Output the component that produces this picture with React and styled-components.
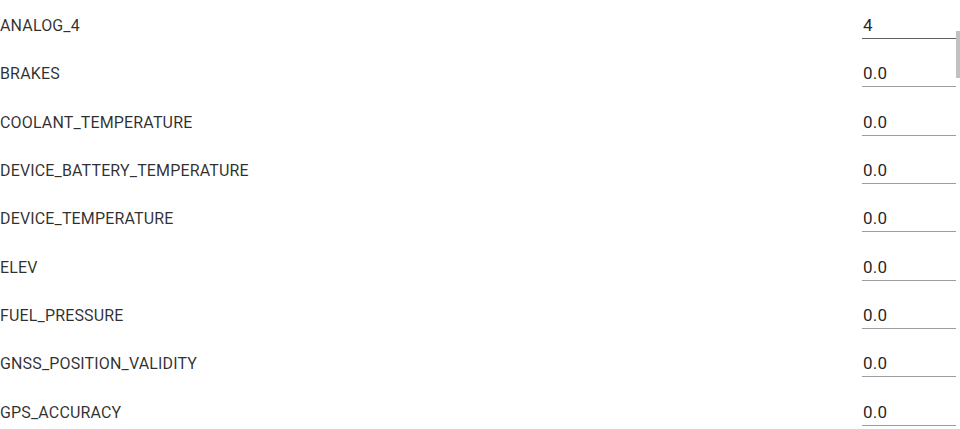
import React from "react";
import styled, { createGlobalStyle } from "styled-components";

const rows = [
  { name: "ANALOG_4", value: "4", active: true },
  { name: "BRAKES", value: "0.0" },
  { name: "COOLANT_TEMPERATURE", value: "0.0" },
  { name: "DEVICE_BATTERY_TEMPERATURE", value: "0.0" },
  { name: "DEVICE_TEMPERATURE", value: "0.0" },
  { name: "ELEV", value: "0.0" },
  { name: "FUEL_PRESSURE", value: "0.0" },
  { name: "GNSS_POSITION_VALIDITY", value: "0.0" },
  { name: "GPS_ACCURACY", value: "0.0" },
];

function App() {
  return (
    <>
      <GlobalStyle />
      <Page>
        <List>
          {rows.map((r) => (
            <Row key={r.name}>
              <Label>{r.name}</Label>
              <Field $active={r.active}>
                <Input defaultValue={r.value} />
              </Field>
            </Row>
          ))}
        </List>
        <ScrollThumb />
      </Page>
    </>
  );
}

export default App;

const GlobalStyle = createGlobalStyle`
  html, body {
    margin: 0;
    padding: 0;
    background: #fff;
    overflow: hidden;
  }
  body {
    font-family: Roboto, "Liberation Sans", Arial, sans-serif;
  }
`;

const Page = styled.div`
  position: relative;
  width: 960px;
  height: 429px;
  overflow: hidden;
`;

const List = styled.div`
  display: flex;
  flex-direction: column;
  padding: 1px 4px 0 0;
`;

const Row = styled.div`
  display: flex;
  align-items: center;
  justify-content: space-between;
  height: 48.3px;
`;

const Label = styled.div`
  font-size: 16px;
  line-height: 20px;
  padding-top: 2px;
  color: rgba(0, 0, 0, 0.82);
  letter-spacing: 0.15px;
`;

const Field = styled.div`
  width: 94px;
  height: 28px;
  box-sizing: border-box;
  padding: 5px 0 3px;
  border-bottom: 1px solid ${(p) => (p.$active ? "#5f5f5f" : "#9d9d9d")};
  display: flex;
  align-items: center;
`;

const Input = styled.input`
  width: 100%;
  border: none;
  outline: none;
  padding: 0 0 0 1px;
  margin: 0;
  background: transparent;
  font-family: Roboto, "Liberation Sans", Arial, sans-serif;
  font-size: 17px;
  line-height: 19px;
  height: 19px;
  letter-spacing: 0.2px;
  color: rgba(0, 0, 0, 0.87);
`;

const ScrollThumb = styled.div`
  position: absolute;
  top: 31px;
  right: 0;
  width: 4px;
  height: 47px;
  background: #c1c1c1;
`;
